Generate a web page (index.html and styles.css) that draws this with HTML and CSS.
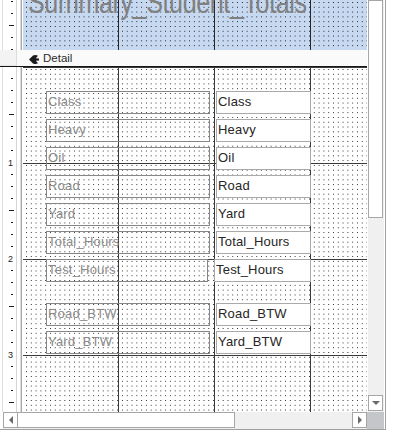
FILE: index.html
```html
<!DOCTYPE html>
<html lang="en">
<head>
  <meta charset="UTF-8" />
  <title>Summary_Student_Totals : Report</title>
  <link rel="stylesheet" href="styles.css">
</head>
<body>

  <div class="designer">

    <div class="sections">

      <div class="section report-header">
        <div class="ruler">
          <div class="ticks ticks-top">
            <div class="t"></div><div class="t"></div><div class="t l"></div><div class="t"></div><div class="t"></div>
          </div>
        </div>
        <div class="canvas canvas-header">
          <div class="title">Summary_Student_Totals</div>
        </div>
      </div>

      <div class="bar">
        <div class="bar-ruler"></div>
        <div class="bar-title">
          <svg class="bar-icon" width="10" height="9" viewBox="0 0 10 9">
            <path d="M0 4.5 L4 0.6 Q6.5 -0.6 9 0.8 L6.8 3.2 L10 3.6 L10 5.4 L6.8 5.8 L9 8.2 Q6.5 9.6 4 8.4 Z" fill="#1c1c1c"/>
          </svg>
          Detail
        </div>
      </div>

      <div class="section detail">
        <div class="ruler">
          <div class="ticks">
            <div class="t"></div><div class="t"></div><div class="t"></div><div class="t l"></div>
            <div class="t"></div><div class="t"></div><div class="t"></div><div class="t n">1</div>
            <div class="t"></div><div class="t"></div><div class="t"></div><div class="t l"></div>
            <div class="t"></div><div class="t"></div><div class="t"></div><div class="t n">2</div>
            <div class="t"></div><div class="t"></div><div class="t"></div><div class="t l"></div>
            <div class="t"></div><div class="t"></div><div class="t"></div><div class="t n">3</div>
            <div class="t"></div><div class="t"></div><div class="t"></div><div class="t l"></div>
            <div class="t"></div>
          </div>
        </div>
        <div class="canvas canvas-detail">
          <div class="row r1"><div class="ctl lbl">Class</div><div class="ctl txt">Class</div></div>
          <div class="row r2"><div class="ctl lbl">Heavy</div><div class="ctl txt">Heavy</div></div>
          <div class="row r3"><div class="ctl lbl">Oil</div><div class="ctl txt">Oil</div></div>
          <div class="row r4"><div class="ctl lbl">Road</div><div class="ctl txt">Road</div></div>
          <div class="row r5"><div class="ctl lbl">Yard</div><div class="ctl txt">Yard</div></div>
          <div class="row r6"><div class="ctl lbl">Total_Hours</div><div class="ctl txt">Total_Hours</div></div>
          <div class="row r7 shifted"><div class="ctl lbl">Test_Hours</div><div class="ctl txt">Test_Hours</div></div>
          <div class="row r8"><div class="ctl lbl">Road_BTW</div><div class="ctl txt">Road_BTW</div></div>
          <div class="row r9"><div class="ctl lbl">Yard_BTW</div><div class="ctl txt">Yard_BTW</div></div>
        </div>
      </div>

    </div>

    <div class="vscroll">
      <div class="vthumb"></div>
      <div class="sbtn vbtn"><span class="arrow-down"></span></div>
    </div>

    <div class="hscroll">
      <div class="sbtn hbtn"><span class="arrow-left"></span></div>
      <div class="hthumb"></div>
      <div class="sbtn hbtn right"><span class="arrow-right"></span></div>
    </div>

    <div class="corner"></div>

  </div>

</body>
</html>
```

FILE: styles.css
```css
body {
  margin: 0;
  background: #fff;
  font-family: "Liberation Sans", Arial, sans-serif;
  overflow: hidden;
}

.designer {
  display: grid;
  grid-template-columns: 367px 17px;
  grid-template-rows: 412px 17px;
  width: 385px;
  border-right: 1px solid #a0a0a0;
  border-bottom: 1px solid #a0a0a0;
}

.sections {
  display: flex;
  flex-direction: column;
  overflow: hidden;
}

.section {
  display: flex;
}

.report-header {
  height: 50px;
  flex: none;
}

.detail {
  flex: 1;
  min-height: 0;
}

/* vertical ruler */
.ruler {
  width: 23px;
  flex: none;
  overflow: hidden;
  background: linear-gradient(to right,
    #fff 2px, #dedede 2px 3px, #fff 3px 16px, #d6d6d6 16px 17px,
    #fff 17px 20px, #dadada 20px 21px, #a9a9a9 21px 22px, #fff 22px);
}

.ticks {
  margin-left: 9px;
  width: 6px;
  padding-top: 5px;
}

.ticks-top {
  padding-top: 0;
  margin-top: -5px;
}

.t {
  height: 12px;
  box-sizing: border-box;
  padding-top: 6px;
}

.t::before {
  content: "";
  display: block;
  width: 2px;
  height: 1px;
  margin-left: 2px;
  background: #1e1e1e;
}

.t.l::before {
  width: 5px;
  margin-left: 0;
}

.t.n::before {
  display: none;
}

.t.n {
  font-size: 9px;
  line-height: 9px;
  padding-top: 3px;
  color: #222;
  margin-left: -1px;
}

/* design surface */
.canvas {
  flex: 1;
  position: relative;
  overflow: hidden;
}

.canvas-header {
  background-color: #c6d9f1;
  background-image:
    linear-gradient(to right, transparent 95px, #26262b 95px 96px, transparent 96px),
    radial-gradient(circle at 0.5px 0.5px, #1e1e1e 0.6px, transparent 0.9px);
  background-size: 96px 100%, 4.8px 4.8px;
  background-position: 0 0, 3px 2px;
}

.canvas-detail {
  background-color: #fff;
  background-image:
    linear-gradient(to right, transparent 95px, #3a3a3a 95px 96px, transparent 96px),
    linear-gradient(to bottom, transparent 95px, #3a3a3a 95px 96px, transparent 96px),
    radial-gradient(circle at 0.5px 0.5px, #2a2a2a 0.6px, transparent 0.9px);
  background-size: 96px 100%, 100% 96px, 4.8px 4.8px;
  background-position: 0 0, 0 1px, 3px 2px;
}

.title {
  position: absolute;
  left: 5px;
  top: -13px;
  font-size: 31px;
  line-height: 31px;
  letter-spacing: -0.5px;
  color: #808080;
  white-space: nowrap;
  transform: scaleX(0.81);
  transform-origin: left top;
}

/* section bar */
.bar {
  height: 17px;
  flex: none;
  box-sizing: border-box;
  border-bottom: 1px solid #161616;
  background: #fafafa;
  display: flex;
}

.bar-ruler {
  width: 16px;
  height: 15px;
  border-right: 1px solid #dcdcdc;
  border-bottom: 1px solid #e4e4e4;
  background: #f3f3f3;
}

.bar-title {
  display: flex;
  align-items: center;
  gap: 4px;
  padding-left: 12px;
  padding-top: 1px;
  font-size: 11.5px;
  line-height: 15px;
  color: #2c2c2c;
}

.bar-icon {
  margin-top: 1px;
}

/* controls */
.row {
  position: absolute;
  left: 23px;
  display: flex;
  gap: 6px;
}

.r1 { top: 24px; }
.r2 { top: 52px; }
.r3 { top: 80px; }
.r4 { top: 108px; }
.r5 { top: 136px; }
.r6 { top: 164px; }
.r7 { top: 192px; }
.r8 { top: 236px; }
.r9 { top: 264px; }

.ctl {
  height: 23px;
  box-sizing: border-box;
  padding-left: 1px;
  font-size: 13px;
  line-height: 20px;
  letter-spacing: 0.2px;
  white-space: nowrap;
  overflow: hidden;
}

.lbl {
  width: 164px;
  border: 1px solid #868686;
  color: #8a8a8a;
}

.txt {
  width: 95px;
  border: 1px solid #a9a9a9;
  background: #fff;
  color: #262626;
}

.shifted .lbl {
  width: 162px;
}

.shifted .txt {
  width: 97px;
}

/* scroll bars */
.sbtn {
  box-sizing: border-box;
  border: 1px solid #a6a6a6;
  background: #fff;
  display: flex;
  align-items: center;
  justify-content: center;
  flex: none;
}

.vscroll {
  background: linear-gradient(to right, #fff 1px, #f0f0f0 1px);
  display: flex;
  flex-direction: column;
}

.vthumb {
  height: 218px;
  width: 15px;
  margin-left: 1px;
  box-sizing: border-box;
  border: 1px solid #a6a6a6;
  background: #fff;
}

.vbtn {
  width: 15px;
  height: 16px;
  margin: auto 0 1px 1px;
}

.hscroll {
  background: linear-gradient(to right, #fff 3px, #f0f0f0 3px);
  display: flex;
  padding-left: 3px;
}

.hbtn {
  width: 15px;
  height: 16px;
}

.hbtn.right {
  margin-left: auto;
}

.hthumb {
  width: 217px;
  height: 16px;
  box-sizing: border-box;
  border: 1px solid #a6a6a6;
  border-left: none;
  background: #fff;
}

.corner {
  background: #c5c6ca;
}

.arrow-down {
  border-left: 4px solid transparent;
  border-right: 4px solid transparent;
  border-top: 4px solid #6a6a6a;
}

.arrow-left {
  border-top: 4px solid transparent;
  border-bottom: 4px solid transparent;
  border-right: 4px solid #6a6a6a;
}

.arrow-right {
  border-top: 4px solid transparent;
  border-bottom: 4px solid transparent;
  border-left: 4px solid #6a6a6a;
}
```
